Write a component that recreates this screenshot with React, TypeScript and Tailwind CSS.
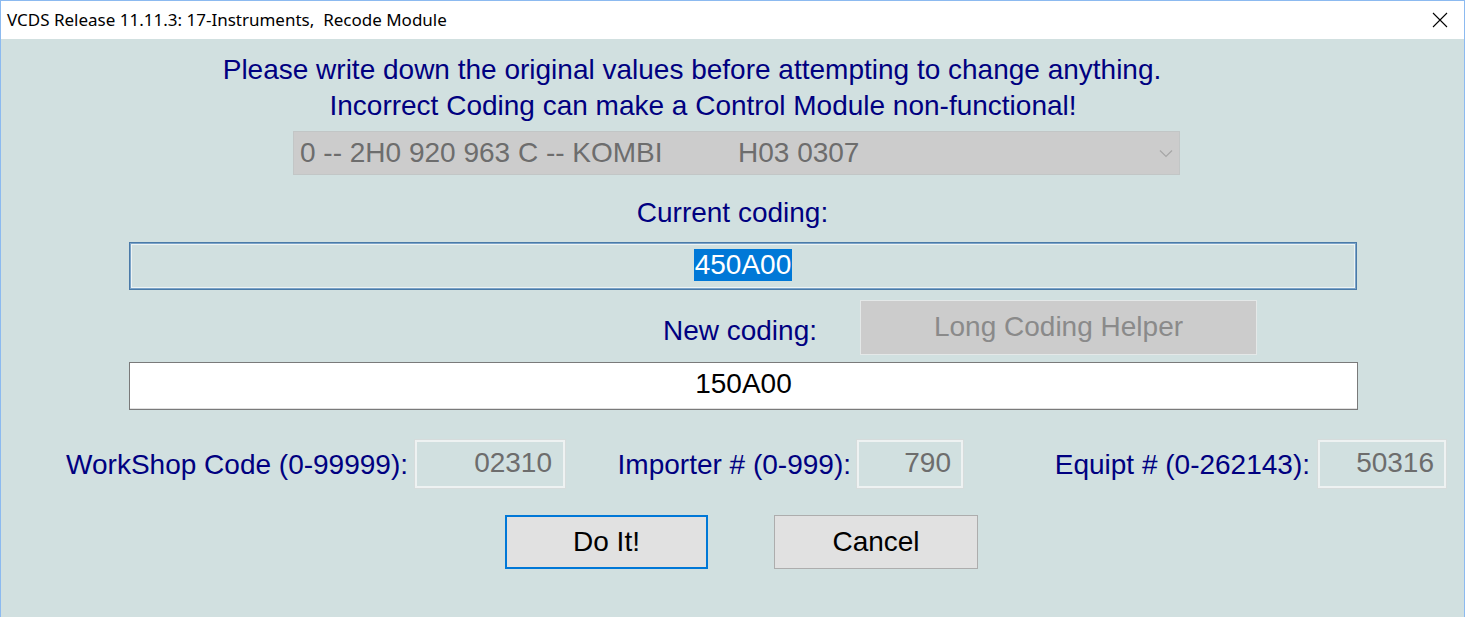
export default function App() {
  return (
    <div className="w-[1465px] h-[617px] flex flex-col border-x border-t border-[#8cbaf0] bg-white overflow-hidden">
      <div className="h-[38px] bg-white flex items-center justify-between pl-[6px] pr-[16px] shrink-0">
        <span className="whitespace-pre text-[17px] text-black" style={{ fontFamily: '"Noto Sans", "Open Sans", sans-serif' }}>
          VCDS Release 11.11.3: 17-Instruments,  Recode Module
        </span>
        <svg width="16" height="16" viewBox="0 0 16 16">
          <path d="M1 1 L15 15 M15 1 L1 15" stroke="#000" strokeWidth="1.1" />
        </svg>
      </div>
      <div className="flex-1 bg-[#d1e0e0] text-[28px] text-[#000080] flex flex-col" style={{ fontFamily: '"Liberation Sans", Arial, sans-serif' }}>
        <div className="mt-[13px] w-[1382px] text-center leading-[36px]">
          Please write down the original values before attempting to change anything.
        </div>
        <div className="w-[1404px] text-center leading-[36px]">
          Incorrect Coding can make a Control Module non-functional!
        </div>

        <div className="mt-[7px] ml-[292px] w-[887px] h-[44px] bg-[#cccccc] border border-[#c2c6c6] flex items-center pl-[6px] pr-[6px] text-[#6d6d6d]">
          <span className="w-[438px] whitespace-pre">0 -- 2H0 920 963 C -- KOMBI</span>
          <span className="flex-1">H03 0307</span>
          <svg width="14" height="9" viewBox="0 0 14 9">
            <path d="M1 1.5 L7 7.5 L13 1.5" fill="none" stroke="#a6a6a6" strokeWidth="1.2" />
          </svg>
        </div>

        <div className="mt-[20px] text-center leading-[36px]">Current coding:</div>

        <div className="mt-[11px] ml-[128px] w-[1228px] h-[48px] border border-[#4a7aa8] shadow-[inset_0_0_0_1px_#7ba3c8,inset_0_0_0_2px_#eef4f4] flex items-center justify-center">
          <span className="bg-[#0078d7] text-white leading-[32px] px-[1px] mb-[2px]">450A00</span>
        </div>

        <div className="mt-[10px] h-[55px] flex items-start">
          <div className="w-[816px] text-right leading-[36px] mt-[13px]">New coding:</div>
          <div className="ml-[43px] w-[397px] h-[55px] bg-[#cccccc] border border-[#e4e8e8] flex items-center justify-center text-[#8a8a8a] pb-[2px]">
            Long Coding Helper
          </div>
        </div>

        <div className="mt-[7px] ml-[128px] w-[1229px] h-[48px] bg-white border border-[#7a7a7a] shadow-[inset_0_-1px_0_0_#e0e0e0] flex items-center justify-center text-black pb-[4px]">
          150A00
        </div>

        <div className="mt-[30px] h-[48px] flex items-center">
          <div className="w-[407px] text-right pt-[2px]">WorkShop Code (0-99999):</div>
          <div className="ml-[7px] w-[150px] h-[48px] border-2 border-[#eef2f2] shadow-[0_0_0_1px_#d6dcdc] text-right pr-[11px] text-[#6d6d6d]">
            02310
          </div>
          <div className="w-[286px] text-right pt-[2px]">Importer # (0-999):</div>
          <div className="ml-[6px] w-[106px] h-[48px] border-2 border-[#eef2f2] shadow-[0_0_0_1px_#d6dcdc] text-right pr-[10px] text-[#6d6d6d]">
            790
          </div>
          <div className="w-[347px] text-right pt-[2px]">Equipt # (0-262143):</div>
          <div className="ml-[8px] w-[128px] h-[48px] border-2 border-[#eef2f2] shadow-[0_0_0_1px_#d6dcdc] text-right pr-[10px] text-[#6d6d6d]">
            50316
          </div>
        </div>

        <div className="mt-[27px] flex items-center text-black">
          <button className="ml-[504px] w-[203px] h-[54px] bg-[#e1e1e1] border-2 border-[#0078d7] flex items-center justify-center">
            Do It!
          </button>
          <button className="ml-[66px] w-[204px] h-[54px] bg-[#e1e1e1] border border-[#adadad] flex items-center justify-center">
            Cancel
          </button>
        </div>
      </div>
    </div>
  );
}
